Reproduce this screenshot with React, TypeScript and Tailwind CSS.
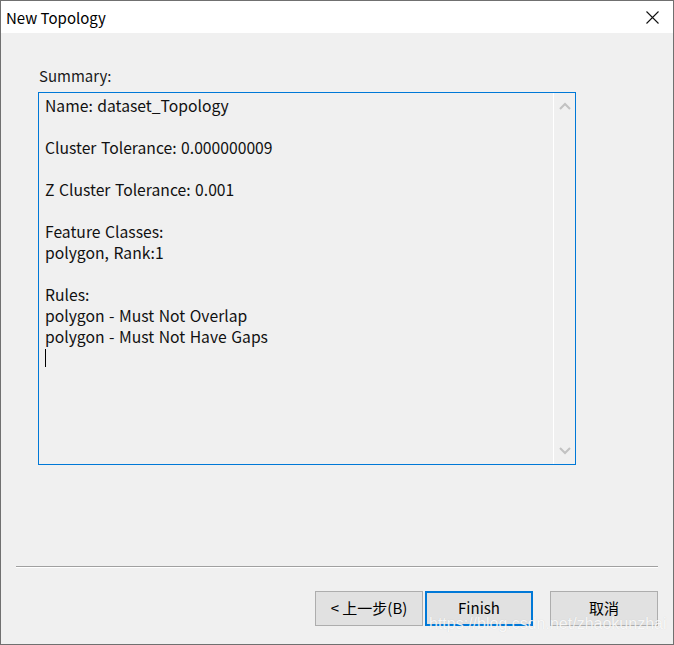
import React from 'react';

const font = { fontFamily: '"Noto Sans CJK SC", "Noto Sans", sans-serif' };

const lines = [
  'Name: dataset_Topology',
  '',
  'Cluster Tolerance: 0.000000009',
  '',
  'Z Cluster Tolerance: 0.001',
  '',
  'Feature Classes:',
  'polygon, Rank:1',
  '',
  'Rules:',
  'polygon - Must Not Overlap',
  'polygon - Must Not Have Gaps',
];

function Chevron({ up }: { up?: boolean }) {
  return (
    <svg width="12" height="8" viewBox="0 0 12 8" className="block">
      <path
        d={up ? 'M1 7 L6 2 L11 7' : 'M1 1 L6 6 L11 1'}
        fill="none"
        stroke="#c2c2c2"
        strokeWidth="2"
      />
    </svg>
  );
}

export default function App() {
  return (
    <div
      className="relative w-[674px] h-[645px] border border-[#707070] bg-[#f0f0f0] flex flex-col text-[15.7px] text-black"
      style={font}
    >
      {/* Title bar */}
      <div className="h-[32px] bg-white flex items-center justify-between pl-[5px] pr-[14px]">
        <span className="text-[15px] leading-none">New Topology</span>
        <svg width="13" height="13" viewBox="0 0 13 13">
          <path d="M0.5 0.5 L12.5 12.5 M12.5 0.5 L0.5 12.5" stroke="#111" strokeWidth="1.1" />
        </svg>
      </div>

      {/* Body */}
      <div className="flex-1 flex flex-col pt-[33px]">
        <div className="pl-[38px] leading-[20px] text-[15px] text-[#1a1a1a]">Summary:</div>
        <div className="ml-[37px] mt-[6px] w-[538px] h-[373px] border border-[#0078d7] flex">
          <div className="flex-1 pl-[6px] pt-[2px] leading-[21px] text-[#111] [word-spacing:1px]">
            {lines.map((l, i) => (
              <div key={i} className="h-[21px]">
                {l}
              </div>
            ))}
            <div className="h-[21px] flex items-center">
              <div className="w-px h-[18px] bg-black" />
            </div>
          </div>
          <div className="w-[22px] border-l border-white flex flex-col items-center justify-between pt-[9px] pb-[9px]">
            <Chevron up />
            <Chevron />
          </div>
        </div>

        <div className="mt-[101px] mx-[15px] border-t border-[#a0a0a0] border-b border-b-white" />

        <div className="mt-[23px] flex pl-[314px] text-[15px]">
          <button className="w-[108px] h-[35px] bg-[#e1e1e1] border border-[#adadad]">
            &lt; 上一步(B)
          </button>
          <button className="ml-[2px] w-[108px] h-[35px] bg-[#e1e1e1] border-2 border-[#0078d7]">
            Finish
          </button>
          <button className="ml-[17px] w-[108px] h-[35px] bg-[#e1e1e1] border border-[#adadad]">
            取消
          </button>
        </div>
      </div>

      <div
        className="absolute left-[428px] top-[614px] text-[16px] leading-[18px] text-white/85 pointer-events-none"
        style={{ fontFamily: '"Liberation Sans", Arial, sans-serif', textShadow: '0 0 1px rgba(0,0,0,0.15)' }}
      >
        https://blog.csdn.net/zhaokunzhai
      </div>
    </div>
  );
}
